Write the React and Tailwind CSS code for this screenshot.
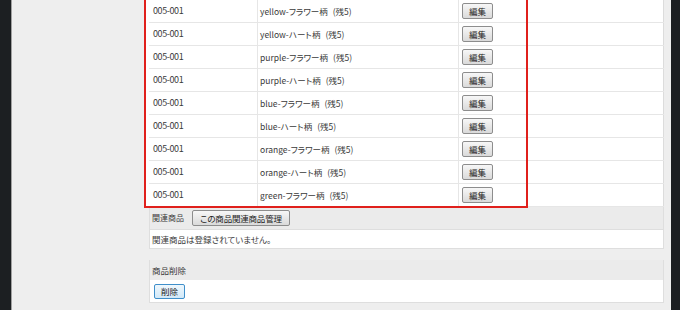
import React from "react";

const rows = [
  "yellow-フラワー柄",
  "yellow-ハート柄",
  "purple-フラワー柄",
  "purple-ハート柄",
  "blue-フラワー柄",
  "blue-ハート柄",
  "orange-フラワー柄",
  "orange-ハート柄",
  "green-フラワー柄",
];

function Btn({ children, className = "" }) {
  return (
    <button
      className={
        "h-[16px] whitespace-nowrap border border-[#8d8d8d] rounded-[2px] bg-gradient-to-b from-[#f7f7f7] to-[#dadada] leading-none text-[#222] " +
        className
      }
    >
      {children}
    </button>
  );
}

export default function App() {
  return (
    <div className="w-[680px] h-[310px] flex overflow-hidden bg-[#eeeeee] text-[#3a3a3a] text-[9px] font-['Noto_Sans_CJK_JP','Noto_Sans',sans-serif] [font-feature-settings:'palt']">
      <div className="w-[11px] shrink-0 bg-[#1c1f22]" />
      <div className="w-px shrink-0 bg-[#a0a0a0]" />
      <div className="relative flex-1 pl-[137px] pr-[7px]">
        {/* variation table */}
        <div className="-ml-[3px] pl-[3px] bg-white">
          {rows.map((name) => (
            <div
              key={name}
              className="grid grid-cols-[109px_201px_1fr] h-[23px] border-b border-[#e6e6e6]"
            >
              <div className="flex items-center pl-[4px] border-r border-[#e6e6e6] tracking-[-0.4px]">
                005-001
              </div>
              <div className="flex items-center pl-[2px] border-r border-[#e6e6e6] text-[8.5px]">
                <span>{name}</span>
                <span className="ml-[5px]">(残5)</span>
              </div>
              <div className="flex items-center pl-[3px] border-r border-[#dcdcdc]">
                <Btn className="w-[31px] text-[8.5px]">編集</Btn>
              </div>
            </div>
          ))}
        </div>

        {/* related items */}
        <div className="border-x border-b border-[#dedede]">
          <div className="h-[23px] bg-[#ebebeb] flex items-center pl-[2px] gap-[8px] border-b border-[#dedede]">
            <span className="text-[8px]">関連商品</span>
            <Btn className="w-[98px] text-[8.5px] tracking-[-0.2px]">この商品関連商品管理</Btn>
          </div>
          <div className="h-[18px] bg-white flex items-center pl-[2px] text-[8.5px]">
            関連商品は登録されていません。
          </div>
        </div>

        {/* delete */}
        <div className="mt-[11px] border-x border-b border-[#dedede]">
          <div className="h-[20px] bg-[#ebebeb] flex items-center pl-[2px] text-[8.5px]">
            商品削除
          </div>
          <div className="h-[22px] bg-white flex items-center pl-[4px]">
            <button className="w-[31px] h-[15px] border border-[#3f8fca] rounded-[2px] bg-gradient-to-b from-[#eef7fd] to-[#d2e9f8] text-[8.5px] leading-none text-[#222]">
              削除
            </button>
          </div>
        </div>

        {/* highlight frame */}
        <div className="pointer-events-none absolute left-[132px] -top-[4px] w-[384px] h-[212px] border-2 border-[#e0201c]" />
      </div>
      <div className="w-[9px] shrink-0 bg-[#1c1f22]" />
    </div>
  );
}
